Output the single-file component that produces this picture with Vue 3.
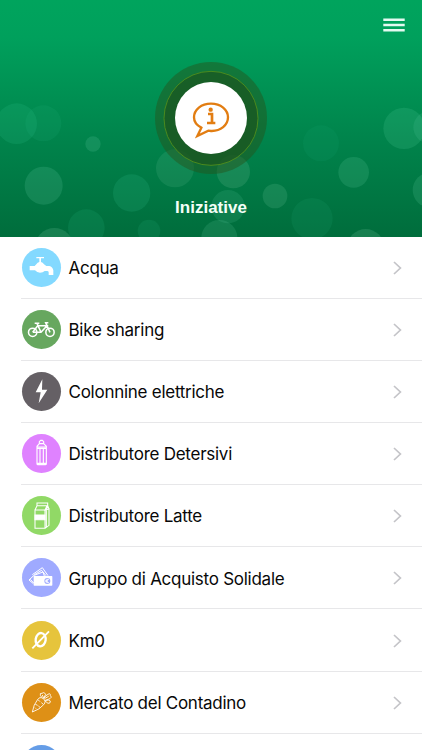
<script setup>
const bubbles = [
  { x: 50, y: 371, r: 61, o: 0.13, c: '#3dd6a0' },
  { x: 130, y: 370, r: 54, o: 0.1, c: '#2fc890' },
  { x: 279, y: 432, r: 23, o: 0.17, c: '#70d8b0' },
  { x: 131, y: 557, r: 57, o: 0.17, c: '#70d8b0' },
  { x: 395, y: 579, r: 56, o: 0.14, c: '#3dd6a0' },
  { x: 259, y: 683, r: 55, o: 0.13, c: '#2fc890' },
  { x: 447, y: 693, r: 34, o: 0.12, c: '#2fc890' },
  { x: 163, y: 742, r: 58, o: 0.17, c: '#8fdcb8' },
  { x: 684, y: 620, r: 50, o: 0.13, c: '#70d8b0' },
  { x: 658, y: 714, r: 54, o: 0.15, c: '#70d8b0' },
  { x: 825, y: 588, r: 37, o: 0.15, c: '#8fdcb8' },
  { x: 963, y: 430, r: 54, o: 0.16, c: '#109f70' },
  { x: 1061, y: 517, r: 46, o: 0.16, c: '#70d8b0' },
  { x: 936, y: 656, r: 62, o: 0.14, c: '#20a878' },
  { x: 1212, y: 385, r: 62, o: 0.16, c: '#60d8a8' },
  { x: 1288, y: 382, r: 48, o: 0.13, c: '#70d8b0' },
  { x: 1291, y: 570, r: 53, o: 0.16, c: '#70d8b0' },
  { x: 1097, y: 742, r: 55, o: 0.17, c: '#8fdcb8' },
  { x: 525, y: 505, r: 57, o: 0.15, c: '#70c8a0' },
  { x: 700, y: 515, r: 50, o: 0.18, c: '#80c8a0' },
]

const items = [
  { id: 'tap', label: 'Acqua', tone: 'sky' },
  { id: 'bike', label: 'Bike sharing', tone: 'green' },
  { id: 'bolt', label: 'Colonnine elettriche', tone: 'gray' },
  { id: 'bottle', label: 'Distributore Detersivi', tone: 'violet' },
  { id: 'milk', label: 'Distributore Latte', tone: 'lime' },
  { id: 'cash', label: 'Gruppo di Acquisto Solidale', tone: 'indigo' },
  { id: 'zero', label: 'Km0', tone: 'yellow' },
  { id: 'carrot', label: 'Mercato del Contadino', tone: 'orange' },
  { id: 'next', label: '', tone: 'blue' },
]
</script>

<template>
  <div class="screen">
    <header class="hero">
      <svg class="bokeh" viewBox="0 0 1266 709.5" aria-hidden="true">
        <circle v-for="(b, i) in bubbles" :key="i" :cx="b.x" :cy="b.y" :r="b.r" :fill="b.c" :fill-opacity="b.o" />
        <circle cx="633" cy="354" r="168" fill="#285018" fill-opacity=".45" />
        <circle cx="633" cy="355" r="141" fill="#1b5520" fill-opacity=".7" stroke="#54911c" stroke-width="2.5" />
      </svg>
      <button class="menu" aria-label="Menu">
        <svg viewBox="0 0 22 14"><path d="M.3 1.8H21.7M.3 7H21.7M.3 12.2H21.7" stroke="#e4faf1" stroke-width="2.5" /></svg>
      </button>
      <div class="badge">
        <svg viewBox="0 0 216 216" fill="none" stroke="#e27d12">
          <path d="M79 137C65 130 57 119 57 106C57 83 79 65 108 65S159 83 159 106S137 148 108 147L100 146L67 162L79 137Z" stroke-width="7" />
          <circle cx="107" cy="83" r="6.5" fill="#e27d12" stroke="none" />
          <path d="M99 96H111V123M96 123H121" stroke-width="8" />
        </svg>
      </div>
      <h1>Iniziative</h1>
    </header>

    <ul class="list">
      <li v-for="item in items" :key="item.id" class="row">
        <svg class="icon" :class="item.tone" viewBox="0 0 117 117" fill="none" stroke="#fff" stroke-width="3">
          <g v-if="item.id === 'tap'" fill="#fff" stroke="none">
            <path d="M43 27H66V31H57V42L62 44L66 49L73 54H82Q92 56 94 67V81H80V73Q80 69 75 69H68Q63 74 54 74T39 67H23V54H38L47 44L52 42V31H43Z" />
          </g>
          <g v-else-if="item.id === 'bike'" stroke-width="4.6">
            <circle cx="32" cy="67" r="12.5" /><circle cx="84" cy="67" r="12.5" />
            <path d="M32 67L47 47H75L57 67H32M57 67L45 40M38 40H52M84 67L71 38H79" />
          </g>
          <path v-else-if="item.id === 'bolt'" d="M61 22L41 61H56L50 94L76 53H60Z" fill="#fff" stroke="none" />
          <g v-else-if="item.id === 'bottle'">
            <path d="M52 29V23L56 19H61L65 23V29ZM52 29L45 37V89Q45 92 48 92H70Q73 92 73 89V37L65 29M45 39H73M54 43V88M64 43V88M45 43H73M45 88H73" stroke-width="3.4" />
          </g>
          <g v-else-if="item.id === 'milk'" stroke-width="3.2">
            <path d="M39 42H69V97H39ZM39 42L45 29H75L69 42L81 39V88L69 97M45 29V21H77V29L81 39M76 31L73 42V92" />
            <path d="M39 57H69V71H39Z" fill="#fff" />
          </g>
          <g v-else-if="item.id === 'cash'" stroke-width="3">
            <path d="M34 77L21 66L36 52L63 42L67 54M25 64L36 76M31 50L61 29L78 53M37 50L59 37L72 53" />
            <rect x="35" y="54" width="56" height="29" rx="2" fill="#fff" stroke="none" />
            <circle cx="76" cy="69" r="9" fill="#9faaff" stroke="none" />
            <path d="M81 64Q72 62 72 69T81 74M70 67H78M70 71H78" stroke-width="2.5" />
          </g>
          <g v-else-if="item.id === 'zero'" stroke-width="7">
            <ellipse cx="56" cy="56" rx="15" ry="20" transform="rotate(8 56 56)" />
            <path d="M31 82L81 31" stroke-width="5.5" />
          </g>
          <g v-else-if="item.id === 'carrot'" stroke-width="2.6" stroke-linejoin="round">
            <path d="M31 87Q35 64 46 51Q53 39 64 47Q74 55 65 65Q54 79 31 87ZM40 64L47 67M48 50L54 56M64 64L58 59M54 73L49 69M42 77L39 74M60 44L55 37Q53 29 60 31Q65 26 70 32Q73 35 68 39L65 46Q72 37 78 34Q86 29 85 38Q92 42 84 47L70 52Q82 50 85 54Q86 62 78 61L68 53M65 46L61 36M67 47L80 40" />
          </g>
        </svg>
        <span class="label">{{ item.label }}</span>
        <svg class="chevron" viewBox="0 0 9 14" fill="none"><path d="M1 1L7.4 7L1 13" stroke="#c4c4c8" stroke-width="1.7" /></svg>
      </li>
    </ul>
  </div>
</template>

<style>
body { margin: 0; overflow: hidden; }
</style>

<style scoped>
.screen { height: 750px; overflow: hidden; background: #fff; font-family: Inter, sans-serif; }
.hero {
  position: relative;
  box-sizing: border-box;
  height: 236.5px;
  padding-top: 82px;
  display: flex;
  flex-direction: column;
  align-items: center;
  overflow: hidden;
  background: linear-gradient(#00a45d 0%, #00a05c 16%, #00834b 60%, #006d3c 100%);
}
.bokeh { position: absolute; inset: 0; width: 422px; height: 236.5px; }
.menu {
  position: absolute;
  top: 18px;
  right: 17px;
  padding: 0;
  border: 0;
  background: none;
}
.menu svg { display: block; width: 22px; height: 14px; }
.badge { position: relative; width: 72px; height: 72px; border-radius: 50%; background: #fff; }
.badge svg { display: block; width: 72px; height: 72px; }
h1 {
  position: relative;
  margin: 44px 0 0;
  color: #f4fff8;
  font: bold 17px/20px "Liberation Sans", sans-serif;
}
.list { margin: 0 0 0 21px; padding: 0; list-style: none; }
.row {
  box-sizing: border-box;
  display: flex;
  align-items: center;
  height: 62.16px;
  padding-right: 20px;
  border-bottom: 1px solid #e7e7e9;
}
.icon { flex: none; width: 39px; height: 39px; margin-left: 0.5px; border-radius: 50%; }
.label {
  flex: 1;
  padding: 1.5px 0 0 8px;
  color: #080808;
  font-size: 17px;
  letter-spacing: -0.26px;
  white-space: nowrap;
}
.chevron { width: 9px; height: 14px; margin-top: 1px; }
.sky { background: #83d9ff; }
.green { background: #67a75f; }
.gray { background: #656065; }
.violet { background: #df82ff; }
.lime { background: #91d966; }
.indigo { background: #9faaff; }
.yellow { background: #e6c43c; }
.orange { background: #de9016; }
.blue { background: #659de7; }
</style>
